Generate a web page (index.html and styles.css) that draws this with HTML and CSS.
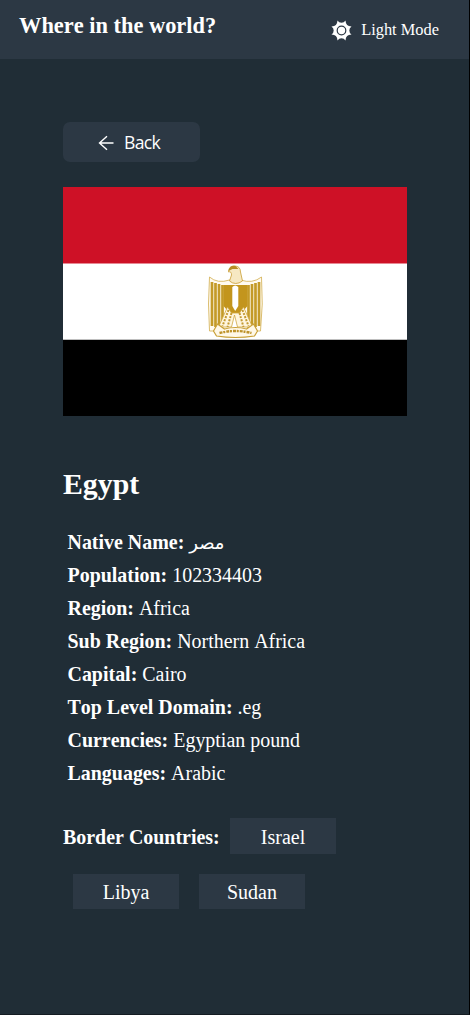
FILE: index.html
```html
<!DOCTYPE html>
<html lang="en">
<head>
<meta charset="utf-8">
<title>Where in the world?</title>
<link rel="stylesheet" href="styles.css">
</head>
<body>
<header class="header">
  <h1 class="brand">Where in the world?</h1>
  <button class="mode">
    <svg class="sun" viewBox="-10.500 -10.500 21 21">
      <path fill="#fff" d="M-4-10Q-2.500-7.800 0-7.800T4-10Q4.200-7 5.600-5.600T10-4Q7.800-2.500 7.800 0T10 4Q7 4.200 5.600 5.600T4 10Q2.500 7.800 0 7.800T-4 10Q-4.200 7-5.600 5.600T-10 4Q-7.800 2.500-7.800 0T-10-4Q-7-4.200-5.600-5.600T-4-10Z"/>
      <circle r="4.300" fill="#fff" stroke="#2c3844" stroke-width="1.200"/>
    </svg>
    <span>Light Mode</span>
  </button>
</header>
<main class="page">
  <button class="back">
    <svg class="arrow" viewBox="0 0 16 16"><path d="M15.500 8H1.500M9 1.200 1.500 8 9 14.800"/></svg>
    <span>Back</span>
  </button>
  <svg class="flag" viewBox="0 0 344 229">
    <path fill="#ce1126" d="M0 0H344V77H0Z"/>
    <path fill="#fff" d="M0 76.600H344V153H0Z"/>
    <path fill="#000" d="M0 152.700H344V229H0Z"/>
    <g transform="translate(138.500 73)">
      <path fill="#fffaf0" stroke="#d2ad4c" stroke-width=".8" d="M28 20Q16 24 8 17Q6 44 8 71L18 71 29 52H38L48 71 59 71Q62 44 60 17Q51 24 39 20Z"/>
      <path fill="none" stroke="#c49a28" stroke-width="2.700" d="M10.500 22V66M14 23V67M17.500 24V65M21 25V61M57.500 22V66M54 23V67M50.500 24V65M47 25V61"/>
      <path fill="#c3951d" d="M22 25H46V46L39 54H29L22 46Z"/>
      <path fill="#fff" d="M30.800 27Q33.700 24 36.800 27V46L33.700 51 30.800 46Z"/>
      <path fill="#f6e8c2" stroke="#c99d32" stroke-width=".8" d="M28 21 30 15Q30 11 27 12Q27 6 33 6Q39 6 39 12L41 21Q34 26 28 21Z"/>
      <path fill="#b78b22" d="M27 11Q28 5 34 6L37 9 31 9Z"/>
      <path fill="#fff6df" stroke="#d0a843" stroke-width=".8" d="M26 47 17 67H30L33 55 36 67H51L42 47 38 53H30Z"/>
      <path stroke="#c49a32" stroke-width="2" stroke-dasharray="2 1.300" d="M27 50 21 66M30 53 26 67M41 50 47 66M38 53 42 67"/>
      <path fill="#fff8e8" stroke="#c9a037" stroke-width="1.200" d="M16 64 23 69Q34 66 45 69L52 64 56 71 53 76Q34 79 15 76L12 71Z"/>
      <path fill="none" stroke="#be932b" stroke-width="2.400" stroke-dasharray="3 .8 2 1" d="M18 73Q34 69 50 73"/>
    </g>
  </svg>
  <h2 class="country">Egypt</h2>
  <ul class="facts">
    <li><b>Native Name:</b> <span class="arabic" lang="ar">مصر</span></li>
    <li><b>Population:</b> 102334403</li>
    <li><b>Region:</b> Africa</li>
    <li><b>Sub Region:</b> Northern Africa</li>
    <li><b>Capital:</b> Cairo</li>
    <li><b>Top Level Domain:</b> .eg</li>
    <li><b>Currencies:</b> Egyptian pound</li>
    <li><b>Languages:</b> Arabic</li>
  </ul>
  <div class="borders">
    <b class="borders-label">Border Countries:</b>
    <a class="border">Israel</a>
    <a class="border">Libya</a>
    <a class="border">Sudan</a>
  </div>
</main>
</body>
</html>
```
FILE: styles.css
```css
* { box-sizing: border-box; }
body {
  margin: 0;
  height: 1015px;
  overflow: hidden;
  background: #202d36;
  border-right: 1px solid #000;
  border-bottom: 1px solid #141c22;
  color: #fff;
  font-family: "Liberation Serif", "Times New Roman", serif;
  font-size: 20px;
  font-kerning: none;
}
button { border: 0; padding: 0; color: inherit; font: inherit; font-kerning: none; }
.header {
  height: 59px;
  padding: 0 30px 0 19px;
  display: flex;
  justify-content: space-between;
  background: #2c3844;
}
.brand { margin: 13px 0 0; font-size: 22.4px; line-height: 26px; }
.mode {
  height: 60px;
  display: flex;
  align-items: center;
  gap: 9px;
  background: none;
  font-size: 16.4px;
}
.sun { width: 21px; height: 21px; }
.page { padding: 63px 62px 0 63px; }
.back {
  width: 137px;
  height: 40px;
  padding-left: 35px;
  display: flex;
  align-items: center;
  gap: 10px;
  border-radius: 7px;
  background: #2c3844;
  font-family: "Open Sans", sans-serif;
  font-size: 17.6px;
  letter-spacing: -0.7px;
}
.arrow { width: 16px; height: 16px; margin-top: 1px; fill: none; stroke: #fff; stroke-width: 1.4; }
.flag { display: block; width: 344px; height: 229px; margin-top: 25px; }
.country { margin: 51px 0 0; font-size: 29.8px; line-height: 34px; }
.facts { list-style: none; margin: 25px 0 0; padding: 0 0 0 4.5px; }
.facts li { height: 33px; line-height: 33px; white-space: nowrap; font-size: 19.95px; }
.arabic { font-family: "Liberation Serif", "DejaVu Sans", sans-serif; font-size: 18px; }
.borders { margin-top: 28px; display: flex; flex-wrap: wrap; row-gap: 20px; }
.borders-label { width: 157px; line-height: 38px; height: 36px; font-size: 19.95px; white-space: nowrap; }
.border {
  width: 106px;
  height: 35px;
  margin: 0 10px;
  line-height: 36px;
  text-align: center;
  background: #2c3844;
}
.borders-label + .border { height: 36px; line-height: 38px; }
```
